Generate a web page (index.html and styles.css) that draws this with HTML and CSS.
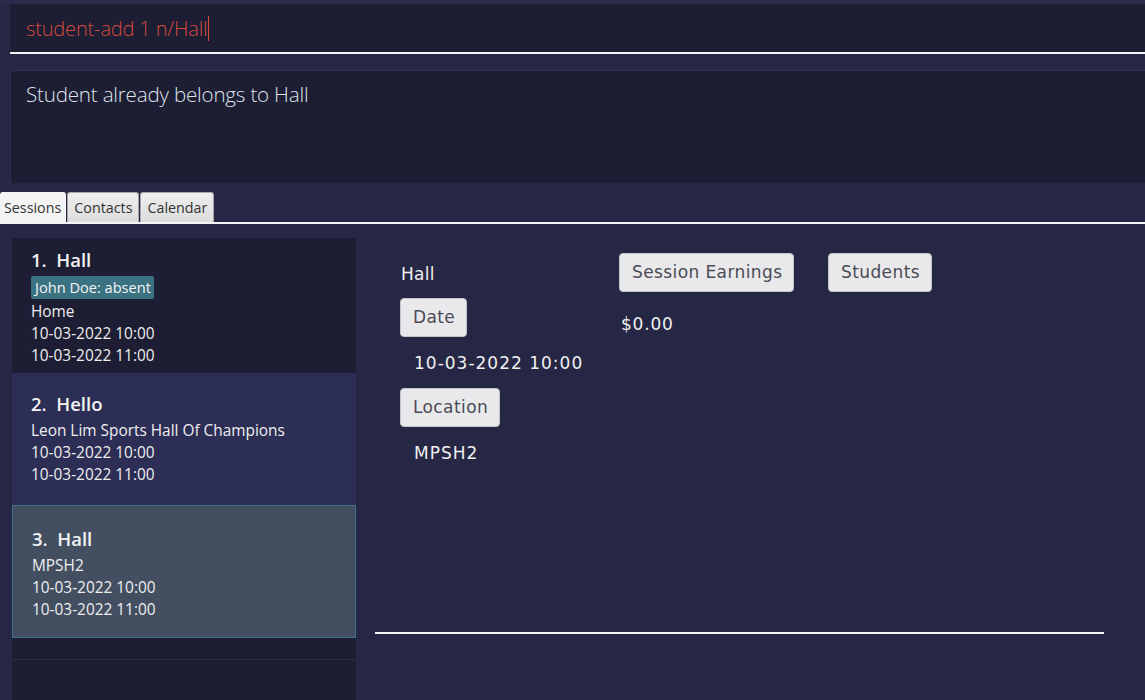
FILE: index.html
```html
<!DOCTYPE html>
<html lang="en">
  <head>
    <meta charset="UTF-8" />
    <meta name="viewport" content="width=device-width, initial-scale=1.0" />
    <title>TutorPro</title>
    <link rel="stylesheet" href="styles.css">
  </head>
  <body>
    <div class="command-box">
      <span class="command-text">student-add 1 n/Hall</span><span class="caret"></span>
    </div>

    <div class="result-box">
      <p>Student already belongs to Hall</p>
    </div>

    <div class="tab-bar">
      <div class="tab active">Sessions</div>
      <div class="tab">Contacts</div>
      <div class="tab">Calendar</div>
    </div>

    <div class="tab-content">
      <div class="session-list">
        <div class="session-cell">
          <div class="cell-title">1.&nbsp; Hall</div>
          <span class="badge">John Doe: absent</span>
          <div class="cell-line">Home</div>
          <div class="cell-line">10-03-2022 10:00</div>
          <div class="cell-line">10-03-2022 11:00</div>
        </div>
        <div class="session-cell odd">
          <div class="cell-title">2.&nbsp; Hello</div>
          <div class="cell-line">Leon Lim Sports Hall Of Champions</div>
          <div class="cell-line">10-03-2022 10:00</div>
          <div class="cell-line">10-03-2022 11:00</div>
        </div>
        <div class="session-cell selected">
          <div class="cell-title">3.&nbsp; Hall</div>
          <div class="cell-line">MPSH2</div>
          <div class="cell-line">10-03-2022 10:00</div>
          <div class="cell-line">10-03-2022 11:00</div>
        </div>
        <div class="session-cell empty"></div>
      </div>

      <div class="session-detail">
        <div class="detail-grid">
          <div class="detail-col first">
            <div class="detail-name">Hall</div>
            <div class="label-btn">Date</div>
            <div class="detail-value">10-03-2022 10:00</div>
            <div class="label-btn">Location</div>
            <div class="detail-value">MPSH2</div>
          </div>
          <div class="detail-col second">
            <div class="label-btn">Session Earnings</div>
            <div class="detail-money">$0.00</div>
          </div>
          <div class="detail-col third">
            <div class="label-btn">Students</div>
          </div>
        </div>
        <div class="detail-rule"></div>
      </div>
    </div>
  </body>
</html>
```

FILE: styles.css
```css
body {
  margin: 0;
  background-color: #262744;
  font-family: "Open Sans", "Noto Sans", sans-serif;
  color: #f0f0f0;
  height: 700px;
  overflow: hidden;
  border-top: 4px solid #2b2c4c;
  box-sizing: border-box;
}

/* command box */
.command-box {
  margin-left: 10px;
  height: 50px;
  background-color: #1d1d33;
  border-bottom: 2px solid #f4f4f4;
  display: flex;
  align-items: center;
  padding-left: 16px;
  box-sizing: border-box;
}

.command-text {
  font-size: 20.1px;
  font-weight: 300;
  color: #d24a3c;
  letter-spacing: -0.2px;
}

.caret {
  display: inline-block;
  width: 1px;
  height: 25px;
  background-color: #d24a3c;
  margin-left: 1px;
}

/* result display */
.result-box {
  margin: 16px 0 0 10px;
  height: 113px;
  background-color: #1d1d33;
  border-top: 1px solid #2c2d4b;
  border-left: 1px solid #2c2d4b;
  box-sizing: border-box;
  padding: 9px 15px;
}

.result-box p {
  margin: 0;
  font-size: 20.6px;
  font-weight: 300;
  color: #dfe3ea;
  letter-spacing: -0.2px;
}

/* tabs */
.tab-bar {
  margin-top: 9px;
  display: flex;
  gap: 1px;
  height: 32px;
  border-bottom: 2px solid #f4f4f4;
  box-sizing: border-box;
  align-items: flex-end;
}

.tab {
  height: 30px;
  padding: 0 6px;
  font-size: 14.3px;
  line-height: 30px;
  color: #333;
  background: linear-gradient(#efefef, #dcdcdc);
  border: 1px solid #a7a7a7;
  border-bottom: none;
  border-radius: 3px 3px 0 0;
  box-sizing: border-box;
}

.tab.active {
  background: #f4f4f4;
  border-color: #f4f4f4;
  padding: 0 4px 0 3px;
}

/* content */
.tab-content {
  display: flex;
  height: 476px;
}

.session-list {
  margin: 14px 0 0 12px;
  width: 344px;
  background-color: #1d1d33;
  flex-shrink: 0;
}

.session-cell {
  height: 135px;
  padding: 10px 19px;
  box-sizing: border-box;
  background-color: #1d1d33;
}

.session-cell.odd {
  height: 132px;
  background-color: #2d2e55;
  padding-top: 19px;
}

.session-cell.selected {
  height: 133px;
  background-color: #434f61;
  border: 1px solid #3c7384;
  padding: 21px 19px 10px;
}

.session-cell.empty {
  height: 22px;
  border-bottom: 1px solid #2c2d44;
}

.cell-title {
  font-size: 18.5px;
  font-weight: 600;
  color: #f2f2f2;
  line-height: 24px;
  margin-bottom: 4px;
}

.badge {
  display: inline-block;
  background-color: #3b7282;
  color: #f4f4f4;
  font-size: 14.6px;
  line-height: 23px;
  padding: 0 3px 0 4px;
  border-radius: 2px;
  margin-bottom: 2px;
}

.cell-line {
  font-size: 15.4px;
  line-height: 22px;
  color: #eeeeee;
}

/* detail pane */
.session-detail {
  flex: 1;
  padding: 29px 41px 0 19px;
}

.detail-grid {
  display: flex;
  padding-left: 25px;
  height: 379px;
}

.detail-col {
  display: flex;
  flex-direction: column;
  align-items: flex-start;
  font-family: "DejaVu Sans", sans-serif;
}

.detail-col.first {
  width: 219px;
}

.detail-col.second {
  width: 209px;
}

.detail-name {
  height: 39px;
  line-height: 42px;
  padding-left: 1px;
  font-size: 17px;
  color: #f0f0f0;
  margin-bottom: 6px;
  letter-spacing: 0.3px;
}

.label-btn {
  height: 39px;
  line-height: 37px;
  padding: 0 11px 0 12px;
  box-sizing: border-box;
  background-color: #e9e9ec;
  border: 1px solid #c5c5cc;
  border-radius: 4px;
  font-size: 17px;
  color: #4b4b55;
  letter-spacing: 0.4px;
}

.detail-value {
  height: 51px;
  line-height: 53px;
  padding-left: 14px;
  font-size: 17px;
  color: #f0f0f0;
  letter-spacing: 1px;
}

.detail-money {
  margin-top: 22px;
  padding-left: 2px;
  font-size: 17px;
  color: #f0f0f0;
  letter-spacing: 0.8px;
}

.detail-rule {
  height: 2px;
  background-color: #f4f4f4;
}
```
